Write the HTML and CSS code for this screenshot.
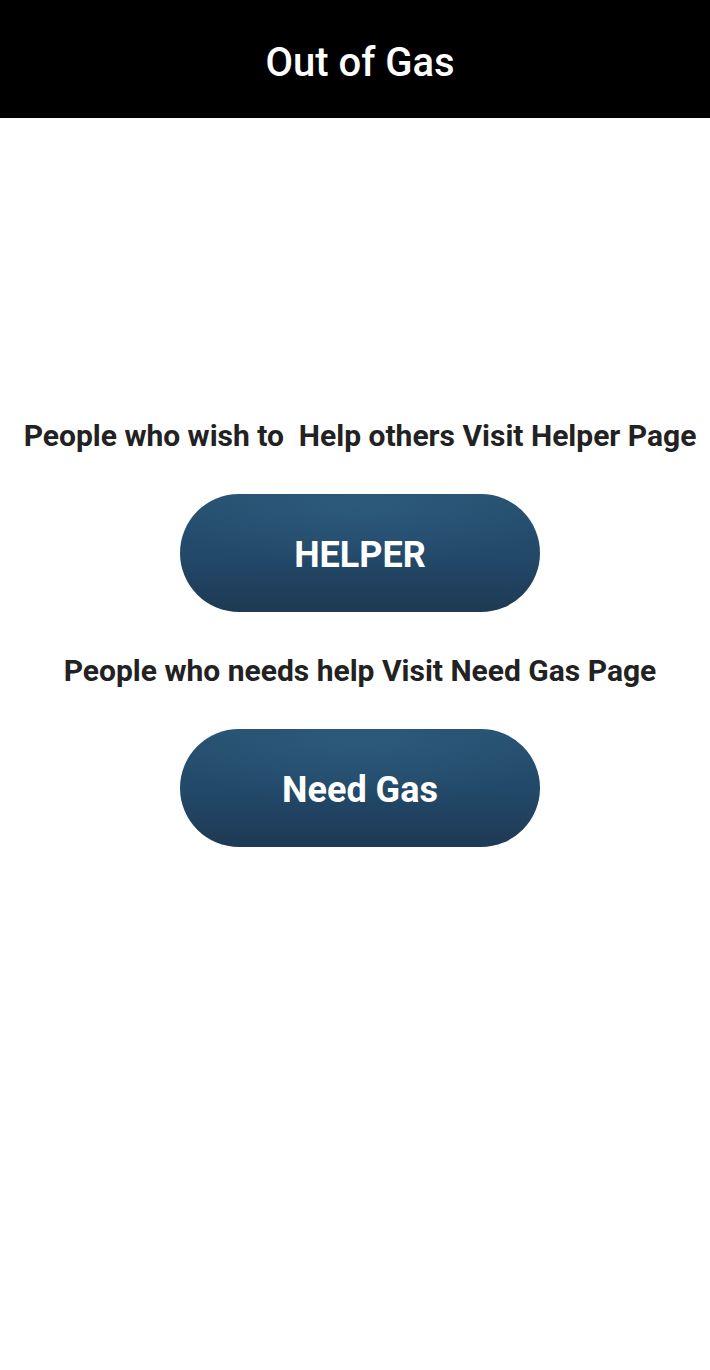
FILE: index.html
```html
<!DOCTYPE html>
<html>
<head>
<meta charset="utf-8">
<link rel="stylesheet" href="styles.css">
</head>
<body>
<header class="topbar"><h1 class="title">Out of Gas</h1></header>
<main class="content">
  <p class="prompt">People who wish to&nbsp; Help others Visit Helper Page</p>
  <button class="pill">HELPER</button>
  <p class="prompt">People who needs help Visit Need Gas Page</p>
  <button class="pill">Need Gas</button>
</main>
</body>
</html>
```
FILE: styles.css
```css
* { box-sizing: border-box; }
html, body { margin: 0; padding: 0; background: #fff; }
html { overflow: hidden; }
body { font-family: Roboto, "Liberation Sans", sans-serif; width: 720px; min-height: 1370px; }
.topbar {
  height: 118px;
  background: #000;
  display: flex;
  align-items: center;
  justify-content: center;
}
.title {
  margin: 0;
  color: #fff;
  font-weight: 500;
  font-size: 40px;
  line-height: 1;
  padding-top: 8px;
}
.content {
  display: flex;
  flex-direction: column;
  align-items: center;
  gap: 42px;
  padding-top: 301px;
}
.prompt {
  margin: 0;
  font-size: 30px;
  line-height: 34px;
  font-weight: 700;
  color: #222;
  text-align: center;
  white-space: nowrap;
}
.prompt + .pill { margin-top: -1px; }
.pill {
  width: 360px;
  height: 118px;
  padding: 4px 0 0;
  border: 0;
  border-radius: 59px;
  color: #fff;
  font-family: Roboto, "Liberation Sans", sans-serif;
  font-weight: 700;
  font-size: 36px;
  background:
    radial-gradient(ellipse 60% 50% at 50% 10%, rgba(50,100,135,0.5), rgba(50,100,135,0) 100%),
    linear-gradient(180deg, #27506f 0%, #23496a 50%, #1e3a54 100%);
}
```
